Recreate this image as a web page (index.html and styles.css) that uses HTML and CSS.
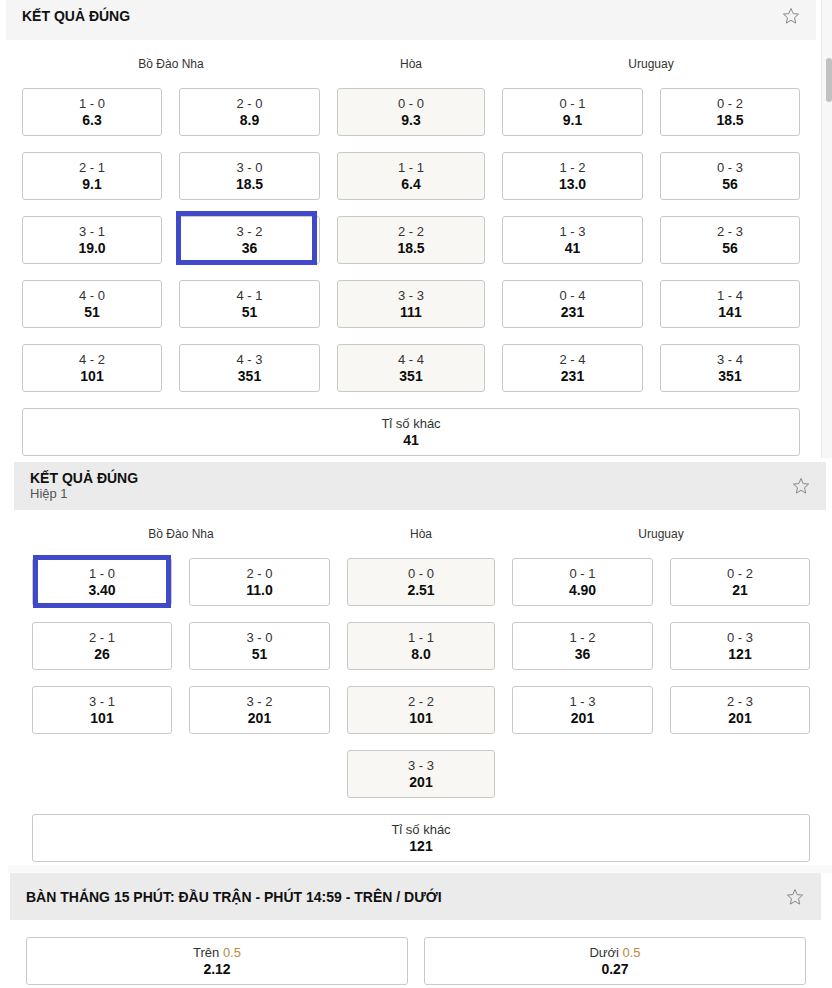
FILE: index.html
```html
<!DOCTYPE html>
<html lang="vi">
<head>
    <meta charset="UTF-8">
    <meta name="viewport" content="width=device-width, initial-scale=1.0">
    <title>Kết quả đúng</title>
    <link rel="stylesheet" href="styles.css">
</head>
<body>
<div class="page">

    <div class="pane">
        <section class="market market-first">
            <header class="market-head">
                <div class="market-titles">
                    <h2>KẾT QUẢ ĐÚNG</h2>
                </div>
                <svg class="star" width="18" height="18" viewBox="0 0 18 18"><polygon points="9,1.5 11.2,6.6 16.6,7.1 12.5,10.7 13.7,16.1 9,13.3 4.3,16.1 5.5,10.7 1.4,7.1 6.8,6.6"/></svg>
            </header>
            <div class="score-grid">
                <div class="col-label span-2">Bồ Đào Nha</div>
                <div class="col-label">Hòa</div>
                <div class="col-label span-2">Uruguay</div>

                <div class="odd-cell"><span class="pick">1 - 0</span><span class="price">6.3</span></div>
                <div class="odd-cell"><span class="pick">2 - 0</span><span class="price">8.9</span></div>
                <div class="odd-cell draw"><span class="pick">0 - 0</span><span class="price">9.3</span></div>
                <div class="odd-cell"><span class="pick">0 - 1</span><span class="price">9.1</span></div>
                <div class="odd-cell"><span class="pick">0 - 2</span><span class="price">18.5</span></div>

                <div class="odd-cell"><span class="pick">2 - 1</span><span class="price">9.1</span></div>
                <div class="odd-cell"><span class="pick">3 - 0</span><span class="price">18.5</span></div>
                <div class="odd-cell draw"><span class="pick">1 - 1</span><span class="price">6.4</span></div>
                <div class="odd-cell"><span class="pick">1 - 2</span><span class="price">13.0</span></div>
                <div class="odd-cell"><span class="pick">0 - 3</span><span class="price">56</span></div>

                <div class="odd-cell"><span class="pick">3 - 1</span><span class="price">19.0</span></div>
                <div class="odd-cell marked marked-a"><span class="pick">3 - 2</span><span class="price">36</span></div>
                <div class="odd-cell draw"><span class="pick">2 - 2</span><span class="price">18.5</span></div>
                <div class="odd-cell"><span class="pick">1 - 3</span><span class="price">41</span></div>
                <div class="odd-cell"><span class="pick">2 - 3</span><span class="price">56</span></div>

                <div class="odd-cell"><span class="pick">4 - 0</span><span class="price">51</span></div>
                <div class="odd-cell"><span class="pick">4 - 1</span><span class="price">51</span></div>
                <div class="odd-cell draw"><span class="pick">3 - 3</span><span class="price">111</span></div>
                <div class="odd-cell"><span class="pick">0 - 4</span><span class="price">231</span></div>
                <div class="odd-cell"><span class="pick">1 - 4</span><span class="price">141</span></div>

                <div class="odd-cell"><span class="pick">4 - 2</span><span class="price">101</span></div>
                <div class="odd-cell"><span class="pick">4 - 3</span><span class="price">351</span></div>
                <div class="odd-cell draw"><span class="pick">4 - 4</span><span class="price">351</span></div>
                <div class="odd-cell"><span class="pick">2 - 4</span><span class="price">231</span></div>
                <div class="odd-cell"><span class="pick">3 - 4</span><span class="price">351</span></div>

                <div class="odd-cell wide"><span class="pick">Tỉ số khác</span><span class="price">41</span></div>
            </div>
        </section>
        <div class="scrollbar"><div class="scroll-thumb"></div></div>
    </div>

    <section class="market market-second">
        <header class="market-head">
            <div class="market-titles">
                <h2>KẾT QUẢ ĐÚNG</h2>
                <div class="sub">Hiệp 1</div>
            </div>
            <svg class="star" width="18" height="18" viewBox="0 0 18 18"><polygon points="9,1.5 11.2,6.6 16.6,7.1 12.5,10.7 13.7,16.1 9,13.3 4.3,16.1 5.5,10.7 1.4,7.1 6.8,6.6"/></svg>
        </header>
        <div class="score-grid">
            <div class="col-label span-2">Bồ Đào Nha</div>
            <div class="col-label">Hòa</div>
            <div class="col-label span-2">Uruguay</div>

            <div class="odd-cell marked marked-b"><span class="pick">1 - 0</span><span class="price">3.40</span></div>
            <div class="odd-cell"><span class="pick">2 - 0</span><span class="price">11.0</span></div>
            <div class="odd-cell draw"><span class="pick">0 - 0</span><span class="price">2.51</span></div>
            <div class="odd-cell"><span class="pick">0 - 1</span><span class="price">4.90</span></div>
            <div class="odd-cell"><span class="pick">0 - 2</span><span class="price">21</span></div>

            <div class="odd-cell"><span class="pick">2 - 1</span><span class="price">26</span></div>
            <div class="odd-cell"><span class="pick">3 - 0</span><span class="price">51</span></div>
            <div class="odd-cell draw"><span class="pick">1 - 1</span><span class="price">8.0</span></div>
            <div class="odd-cell"><span class="pick">1 - 2</span><span class="price">36</span></div>
            <div class="odd-cell"><span class="pick">0 - 3</span><span class="price">121</span></div>

            <div class="odd-cell"><span class="pick">3 - 1</span><span class="price">101</span></div>
            <div class="odd-cell"><span class="pick">3 - 2</span><span class="price">201</span></div>
            <div class="odd-cell draw"><span class="pick">2 - 2</span><span class="price">101</span></div>
            <div class="odd-cell"><span class="pick">1 - 3</span><span class="price">201</span></div>
            <div class="odd-cell"><span class="pick">2 - 3</span><span class="price">201</span></div>

            <div class="odd-cell draw only-draw"><span class="pick">3 - 3</span><span class="price">201</span></div>

            <div class="odd-cell wide"><span class="pick">Tỉ số khác</span><span class="price">121</span></div>
        </div>
    </section>

    <div class="band"></div>

    <section class="market market-third">
        <header class="market-head">
            <div class="market-titles">
                <h2>BÀN THẮNG 15 PHÚT: ĐẦU TRẬN - PHÚT 14:59 - TRÊN / DƯỚI</h2>
            </div>
            <svg class="star" width="18" height="18" viewBox="0 0 18 18"><polygon points="9,1.5 11.2,6.6 16.6,7.1 12.5,10.7 13.7,16.1 9,13.3 4.3,16.1 5.5,10.7 1.4,7.1 6.8,6.6"/></svg>
        </header>
        <div class="ou-grid">
            <div class="odd-cell"><span class="pick">Trên <span class="line">0.5</span></span><span class="price">2.12</span></div>
            <div class="odd-cell"><span class="pick">Dưới <span class="line">0.5</span></span><span class="price">0.27</span></div>
        </div>
    </section>

</div>
</body>
</html>
```

FILE: styles.css
```css
body {
    margin: 0;
    background-color: #fff;
    font-family: "Liberation Sans", Arial, sans-serif;
    color: #333;
}
.page {
    width: 832px;
    height: 988px;
    overflow: hidden;
}
.pane {
    display: flex;
    align-items: flex-start;
}
.market {
    box-sizing: border-box;
}
.market-first {
    margin-left: 6px;
    width: 811px;
    padding-bottom: 2px;
}
.market-second {
    margin-left: 14px;
    margin-top: 4px;
    width: 812px;
    padding-bottom: 3px;
}
.market-third {
    margin-left: 10px;
    width: 811px;
}
.band {
    margin-left: 8px;
    height: 8px;
    background-color: #f9f9f9;
}
.market-head {
    display: flex;
    justify-content: space-between;
    align-items: center;
    background-color: #ebebeb;
    padding: 8px 16px;
}
.market-first .market-head {
    background-color: #f5f5f5;
    height: 40px;
    box-sizing: border-box;
    align-items: flex-start;
}
.market-first .star {
    margin-top: -1px;
}
.market-third .market-head {
    height: 47px;
    box-sizing: border-box;
    padding-right: 17px;
}
.market-head h2 {
    margin: 0;
    font-size: 14px;
    line-height: 16px;
    font-weight: bold;
    color: #111;
}
.market-head .sub {
    font-size: 13px;
    line-height: 16px;
    color: #555;
}
.star {
    display: block;
    fill: none;
    stroke: #888;
    stroke-width: 1;
    stroke-linejoin: round;
}
.score-grid {
    display: grid;
    grid-template-columns: 140px 141px 148px 141px 140px;
    grid-template-rows: 17px;
    grid-auto-rows: 48px;
    column-gap: 17px;
    row-gap: 16px;
    padding: 15px 0 0 16px;
}
.market-second .score-grid {
    padding-left: 18px;
}
.col-label {
    font-size: 12px;
    line-height: 18px;
    text-align: center;
    color: #333;
}
.span-2 {
    grid-column: span 2;
}
.odd-cell {
    position: relative;
    display: flex;
    flex-direction: column;
    justify-content: center;
    align-items: center;
    box-sizing: border-box;
    height: 48px;
    border: 1px solid #c9c9c9;
    border-radius: 3px;
    background-color: #fff;
}
.odd-cell.draw {
    background-color: #f8f7f3;
}
.odd-cell.wide {
    grid-column: 1 / -1;
}
.odd-cell.only-draw {
    grid-column: 3;
}
.pick {
    font-size: 13px;
    line-height: 16px;
    color: #333;
}
.price {
    font-size: 14px;
    line-height: 16px;
    font-weight: bold;
    color: #0d0d0d;
}
.line {
    color: #b8893c;
}
.marked::after {
    content: "";
    position: absolute;
    border: 5px solid #4049c7;
}
.marked-a::after {
    top: -6px;
    left: -4px;
    right: 2px;
    bottom: -2px;
}
.marked-b::after {
    top: -4px;
    left: 0;
    right: 0;
    bottom: -3px;
}
.ou-grid {
    display: grid;
    grid-template-columns: 382px 382px;
    column-gap: 16px;
    padding: 17px 0 0 16px;
}
.scrollbar {
    position: relative;
    margin-left: 5px;
    width: 10px;
    height: 458px;
    background-color: #f7f7f7;
    border-left: 1px solid #ececec;
}
.scroll-thumb {
    position: absolute;
    right: 0;
    top: 58px;
    width: 6px;
    height: 44px;
    border-radius: 3px;
    background-color: #c1c1c1;
}
```
